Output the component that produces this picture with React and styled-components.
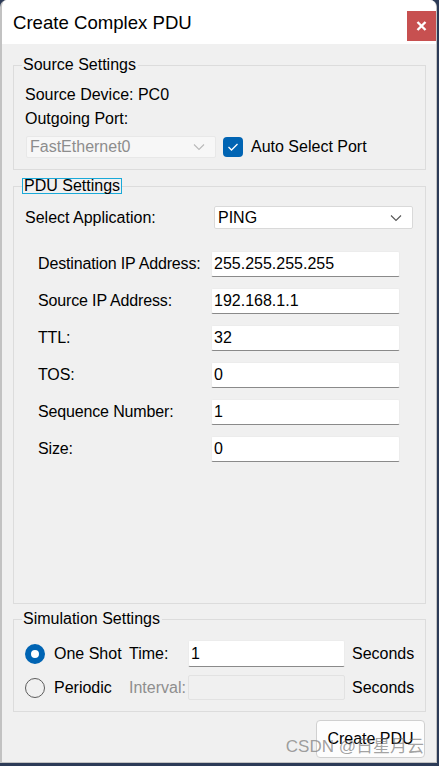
import React from "react";
import styled, { createGlobalStyle } from "styled-components";

const GlobalStyle = createGlobalStyle`
  html, body {
    margin: 0;
    padding: 0;
    background: #2c3b57;
  }
  body {
    font-family: "Liberation Sans", Arial, sans-serif;
    color: #000;
  }
`;

const fields = [
  { label: "Destination IP Address:", value: "255.255.255.255" },
  { label: "Source IP Address:", value: "192.168.1.1" },
  { label: "TTL:", value: "32" },
  { label: "TOS:", value: "0" },
  { label: "Sequence Number:", value: "1" },
  { label: "Size:", value: "0" },
];

const Chevron = ({ color = "#555" }) => (
  <svg width="12" height="8" viewBox="0 0 12 8">
    <polyline points="1,1.5 6,6.5 11,1.5" fill="none" stroke={color} strokeWidth="1.1" />
  </svg>
);

const App = () => {
  return (
    <>
      <GlobalStyle />
      <Page>
        <Window>
          <TitleBar>
            <Title>Create Complex PDU</Title>
            <CloseButton>
              <svg width="11" height="10" viewBox="0 0 11 10">
                <path d="M1.5 1 L9.5 9 M9.5 1 L1.5 9" stroke="#fff" strokeWidth="2.4" />
              </svg>
            </CloseButton>
          </TitleBar>

          <Content>
            <GroupBox>
              <Legend>Source Settings</Legend>
              <SourceBody>
                <Line>Source Device: PC0</Line>
                <Line>Outgoing Port:</Line>
                <PortRow>
                  <Combo $disabled $width={190}>
                    <span>FastEthernet0</span>
                    <Chevron color="#b9b9b9" />
                  </Combo>
                  <CheckBox>
                    <svg width="12" height="10" viewBox="0 0 12 10">
                      <polyline points="1.5,5 4.5,8 10.5,2" fill="none" stroke="#fff" strokeWidth="1.3" />
                    </svg>
                  </CheckBox>
                  <CheckLabel>Auto Select Port</CheckLabel>
                </PortRow>
              </SourceBody>
            </GroupBox>

            <GroupBox $grow $gap={8}>
              <FocusLegend>PDU Settings</FocusLegend>
              <AppRow>
                <Line>Select Application:</Line>
                <Combo $width={199}>
                  <span>PING</span>
                  <Chevron color="#555" />
                </Combo>
              </AppRow>
              <FieldList>
                {fields.map((f) => (
                  <FieldRow key={f.label}>
                    <FieldLabel>{f.label}</FieldLabel>
                    <TextBox>{f.value}</TextBox>
                  </FieldRow>
                ))}
              </FieldList>
            </GroupBox>

            <GroupBox $gap={6}>
              <Legend>Simulation Settings</Legend>
              <SimGrid>
                <Radio $checked />
                <RadioLabel>One Shot</RadioLabel>
                <SimLabel>Time:</SimLabel>
                <TextBox $height={27}>1</TextBox>
                <Unit>Seconds</Unit>

                <Radio />
                <RadioLabel>Periodic</RadioLabel>
                <SimLabel $disabled>Interval:</SimLabel>
                <TextBox $height={25} $disabled />
                <Unit>Seconds</Unit>
              </SimGrid>
            </GroupBox>

            <Footer>
              <Button>Create PDU</Button>
            </Footer>
          </Content>

          <Watermark>CSDN @日星月云</Watermark>
        </Window>
      </Page>
    </>
  );
};

export default App;

const Page = styled.div`
  width: 439px;
  height: 766px;
  overflow: hidden;
`;

const Window = styled.div`
  position: relative;
  box-sizing: border-box;
  width: 437px;
  height: 763px;
  background: #f0f0f0;
  border: 1px solid #c2c2c2;
  border-left-width: 2px;
  border-top: none;
  border-radius: 7px 7px 0 0;
  display: flex;
  flex-direction: column;
  overflow: hidden;
`;

const TitleBar = styled.div`
  height: 44px;
  flex: none;
  background: #fff;
  display: flex;
  align-items: flex-start;
  justify-content: space-between;
`;

const Title = styled.div`
  font-size: 18.6px;
  line-height: 20px;
  margin: 13px 0 0 11px;
  color: #000;
`;

const CloseButton = styled.div`
  width: 29px;
  height: 30px;
  margin-top: 11px;
  background: #c75050;
  display: flex;
  align-items: center;
  justify-content: center;
`;

const Content = styled.div`
  flex: 1;
  display: flex;
  flex-direction: column;
  padding: 0 10px 0 11px;
`;

const GroupBox = styled.fieldset`
  margin: ${(p) => p.$gap ?? 12}px 0 0;
  padding: 0 11px;
  border: 1px solid #dcdcdc;
  min-width: 0;
  ${(p) => (p.$grow ? "flex: 1;" : "")}
`;

const Legend = styled.legend`
  font-size: 16px;
  line-height: 18px;
  padding: 0 2px 0 1px;
  margin-left: -3px;
`;

const FocusLegend = styled.legend`
  font-size: 16px;
  line-height: 14px;
  padding: 0 1px;
  margin-left: -3px;
  border: 1px solid #1aa9d8;
`;

const SourceBody = styled.div`
  display: flex;
  flex-direction: column;
  padding: 11px 0 11px;
`;

const Line = styled.div`
  font-size: 16px;
  line-height: 20px;
  & + & {
    margin-top: 4px;
  }
`;

const PortRow = styled.div`
  display: flex;
  align-items: center;
  margin-top: 7px;
  padding-left: 1px;
`;

const Combo = styled.div`
  box-sizing: border-box;
  width: ${(p) => p.$width}px;
  height: ${(p) => (p.$disabled ? 22 : 23)}px;
  display: flex;
  align-items: center;
  justify-content: space-between;
  padding: 0 10px 0 3px;
  font-size: 16px;
  background: ${(p) => (p.$disabled ? "#f7f7f7" : "#fff")};
  border: 1px solid ${(p) => (p.$disabled ? "#e8e8e8" : "#d9d9d9")};
  color: ${(p) => (p.$disabled ? "#8d8d8d" : "#000")};
  border-radius: 2px;
`;

const CheckBox = styled.div`
  width: 20px;
  height: 20px;
  margin-left: 7px;
  border-radius: 4px;
  background: #0064b3;
  display: flex;
  align-items: center;
  justify-content: center;
`;

const CheckLabel = styled.span`
  font-size: 16px;
  margin-left: 8px;
`;

const AppRow = styled.div`
  display: flex;
  align-items: center;
  justify-content: space-between;
  margin-top: 12px;
  padding-right: 1px;
`;

const FieldList = styled.div`
  display: flex;
  flex-direction: column;
  gap: 11px;
  margin-top: 22px;
  padding-left: 13px;
`;

const FieldRow = styled.div`
  display: grid;
  grid-template-columns: 173px 189px;
  align-items: center;
`;

const FieldLabel = styled.span`
  font-size: 16px;
  letter-spacing: -0.15px;
`;

const TextBox = styled.div`
  box-sizing: border-box;
  height: ${(p) => p.$height ?? 26}px;
  padding: 0 2px;
  display: flex;
  align-items: center;
  font-size: 16px;
  background: ${(p) => (p.$disabled ? "#f0f0f0" : "#fff")};
  border: 1px solid ${(p) => (p.$disabled ? "#e2e2e2" : "#ececec")};
  border-bottom-color: ${(p) => (p.$disabled ? "#e2e2e2" : "#8a8a8a")};
  border-radius: 2px;
`;

const SimGrid = styled.div`
  display: grid;
  grid-template-columns: 29px 75px 59px 157px auto;
  grid-template-rows: 27px 25px;
  row-gap: 8px;
  align-items: center;
  padding: 12px 0 11px;
`;

const Radio = styled.div`
  box-sizing: border-box;
  width: 20px;
  height: 20px;
  border-radius: 50%;
  ${(p) =>
    p.$checked
      ? `
    background: #fff;
    border: 6.5px solid #0064b3;
  `
      : `
    background: transparent;
    border: 1px solid #5c5c5c;
  `}
`;

const RadioLabel = styled.span`
  font-size: 16px;
`;

const SimLabel = styled.span`
  font-size: 16px;
  color: ${(p) => (p.$disabled ? "#8e8e8e" : "#000")};
`;

const Unit = styled.span`
  font-size: 16px;
  margin-left: 7px;
`;

const Footer = styled.div`
  display: flex;
  justify-content: flex-end;
  padding: 8px 1px 4px 0;
`;

const Button = styled.div`
  box-sizing: border-box;
  width: 109px;
  height: 38px;
  display: flex;
  align-items: center;
  justify-content: center;
  font-size: 16px;
  background: #fdfdfd;
  border: 1px solid #d0d0d0;
  border-radius: 4px;
`;

const Watermark = styled.div`
  position: absolute;
  right: 12px;
  bottom: 6px;
  font-size: 17px;
  line-height: 18px;
  color: rgba(110, 110, 110, 0.65);
  font-family: "Liberation Sans", "Noto Sans CJK SC", sans-serif;
`;
